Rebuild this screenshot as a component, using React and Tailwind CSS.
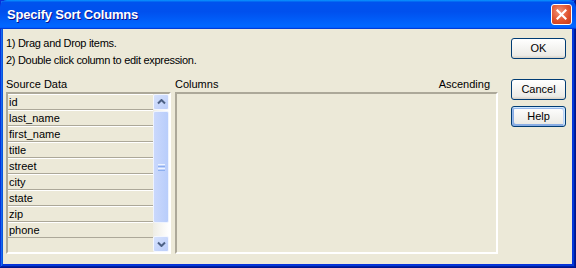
import React from 'react';

const items = ['id', 'last_name', 'first_name', 'title', 'street', 'city', 'state', 'zip', 'phone'];

const Chevron = ({ down }) => (
  <svg width="9" height="6" viewBox="0 0 9 6">
    <path
      d={down ? 'M1 1.5 L4.5 5 L8 1.5' : 'M1 4.5 L4.5 1 L8 4.5'}
      fill="none"
      stroke="#4d6185"
      strokeWidth="2"
    />
  </svg>
);

const XpButton = ({ children, focused }) => (
  <button
    className={
      focused
        ? 'w-[55px] h-[21px] rounded-[3px] border border-[#003c74] bg-[linear-gradient(180deg,#fff,#ecebe6_86%,#d6d0c5)] text-[11px] leading-none text-black shadow-[inset_-1px_1px_#cee7ff,inset_1px_2px_#98b8ea,inset_-2px_2px_#bcd4f6,inset_1px_-1px_#89ade4,inset_2px_-2px_#89ade4]'
        : 'w-[55px] h-[21px] rounded-[3px] border border-[#003c74] bg-[linear-gradient(180deg,#fff,#ecebe6_86%,#d6d0c5)] text-[11px] leading-none text-black'
    }
  >
    {children}
  </button>
);

export default function App() {
  return (
    <div
      className="w-[576px] h-[268px] flex flex-col bg-[#0831d9] shadow-[inset_-1px_-1px_#00138c,inset_1px_1px_#0831d9,inset_-2px_-2px_#001ea0,inset_2px_2px_#166aee,inset_-3px_-3px_#003bda,inset_3px_3px_#0855dd]"
      style={{ fontFamily: '"Liberation Sans", Arial, sans-serif' }}
    >
      {/* title bar */}
      <div className="h-[29px] shrink-0 flex items-center justify-between pl-[7px] pr-[4px] rounded-t-[7px] bg-[linear-gradient(180deg,#0997ff,#0053ee_8%,#0050ee_40%,#06f_88%,#06f_93%,#005bff_95%,#003dd7_96%,#003dd7)]">
        <span className="text-white font-bold text-[13px] tracking-[-0.2px] [text-shadow:1px_1px_#0f1089]">
          Specify Sort Columns
        </span>
        <div className="w-[21px] h-[21px] rounded-[3px] border border-white flex items-center justify-center bg-[radial-gradient(circle_at_40%_35%,#f29478,#e0522d_55%,#c4381a)]">
          <svg width="11" height="11" viewBox="0 0 11 11">
            <path d="M1.5 1.5 L9.5 9.5 M9.5 1.5 L1.5 9.5" stroke="#fff" strokeWidth="2.2" strokeLinecap="square" />
          </svg>
        </div>
      </div>

      {/* client area */}
      <div className="flex-1 flex ml-[3px] mr-[4px] mb-[4px] bg-[#ece9d8] text-[11px] text-black">
        <div className="w-[495px] pl-[3px] pt-[6px] flex flex-col">
          <div className="leading-[17px] tracking-[-0.3px]">
            <div>1) Drag and Drop items.</div>
            <div>2) Double click column to edit expression.</div>
          </div>

          <div className="mt-[8px] flex gap-[4px] leading-[15px]">
            <div className="w-[165px]">Source Data</div>
            <div className="flex-1 flex justify-between pr-[8px]">
              <span>Columns</span>
              <span>Ascending</span>
            </div>
          </div>

          <div className="flex gap-[4px] h-[162px]">
            {/* source list */}
            <div className="w-[165px] flex border-2 border-t-[#aca899] border-l-[#aca899] border-b-white border-r-white">
              <div className="flex-1 flex flex-col">
                {items.map((it) => (
                  <div
                    key={it}
                    className="h-[16px] border-t border-t-white border-b border-b-[#aca899] leading-[14px] pl-[1px]"
                  >
                    {it}
                  </div>
                ))}
              </div>
              {/* scrollbar */}
              <div className="w-[16px] flex flex-col bg-[linear-gradient(90deg,#eeede5,#fff)]">
                <div className="h-[16px] rounded-[2px] border border-[#f4f7fe] bg-[linear-gradient(135deg,#d6e2fd,#bbcdf9)] flex items-center justify-center">
                  <Chevron />
                </div>
                <div className="h-[112px] mt-[1px] rounded-[2px] border border-[#eef3fe] bg-[linear-gradient(90deg,#cad8fc,#b8cdfb)] flex flex-col items-center justify-center gap-[1px]">
                  <div className="w-[7px] h-[1px] bg-[#eef4fe]" />
                  <div className="w-[7px] h-[1px] bg-[#8caff0]" />
                  <div className="w-[7px] h-[1px] bg-[#eef4fe]" />
                  <div className="w-[7px] h-[1px] bg-[#8caff0]" />
                </div>
                <div className="flex-1" />
                <div className="h-[16px] rounded-[2px] border border-[#f4f7fe] bg-[linear-gradient(135deg,#d6e2fd,#bbcdf9)] flex items-center justify-center">
                  <Chevron down />
                </div>
              </div>
            </div>

            {/* columns panel */}
            <div className="flex-1 border-2 border-t-[#aca899] border-l-[#aca899] border-b-white border-r-white" />
          </div>
        </div>

        {/* buttons */}
        <div className="ml-auto mr-[6px] pt-[9px] flex flex-col">
          <XpButton>OK</XpButton>
          <div className="mt-[20px]">
            <XpButton>Cancel</XpButton>
          </div>
          <div className="mt-[6px]">
            <XpButton focused>Help</XpButton>
          </div>
        </div>
      </div>
    </div>
  );
}
